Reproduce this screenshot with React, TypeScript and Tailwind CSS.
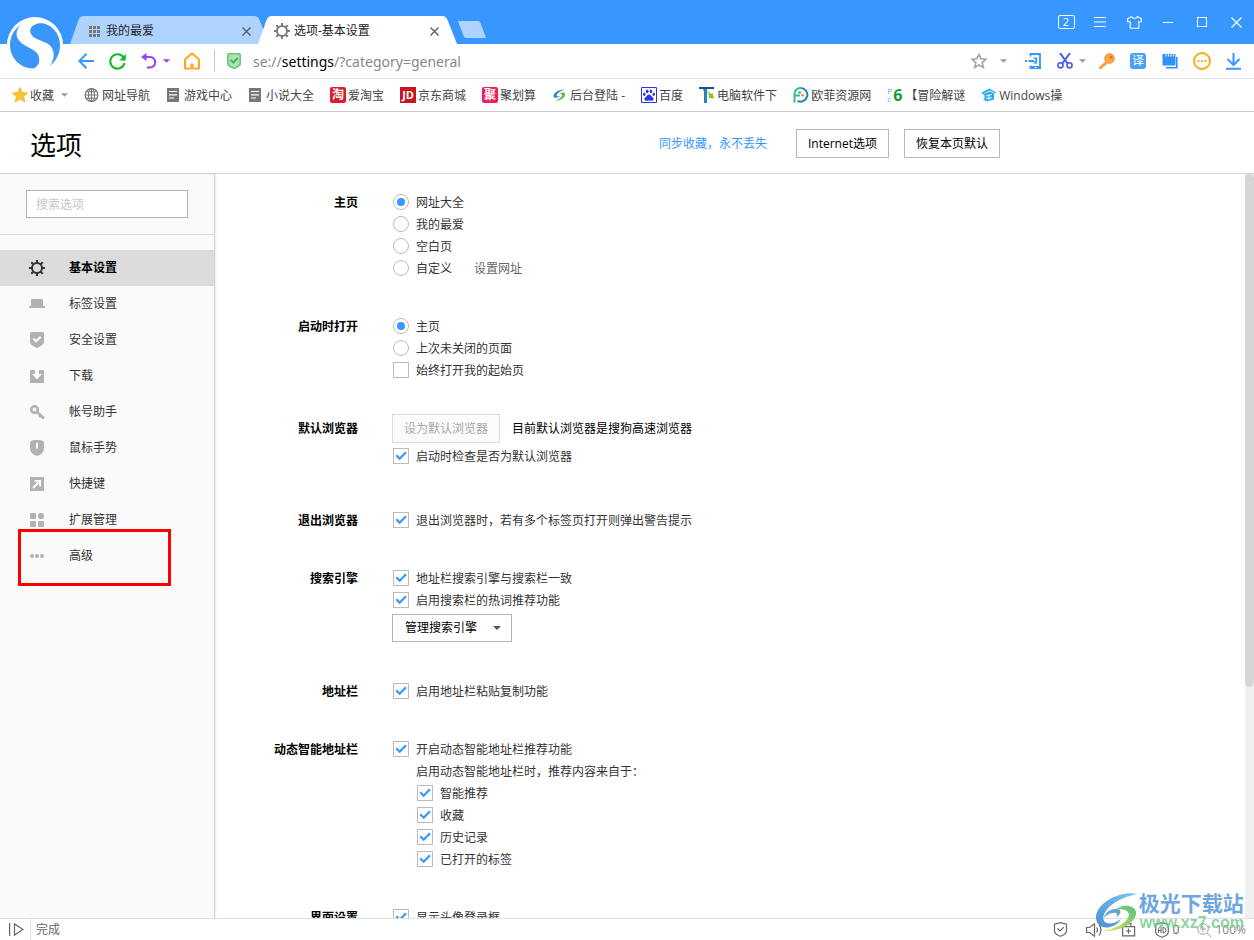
import React from "react";

const sans = "font-['Open_Sans','Noto_Sans_CJK_SC',sans-serif]";

type IconProps = { children: React.ReactNode; className?: string; box?: string };

function Icon({ children, className = "size-4", box = "0 0 16 16" }: IconProps) {
  return (
    <svg viewBox={box} className={`shrink-0 ${className}`} fill="none" aria-hidden="true">
      {children}
    </svg>
  );
}

function Caret({ className = "text-[#999]" }: { className?: string }) {
  return (
    <svg viewBox="0 0 8 4" className={`h-1 w-[7px] shrink-0 ${className}`} aria-hidden="true">
      <path d="M0 0h8L4 4z" fill="currentColor" />
    </svg>
  );
}

function Gear({ className, width = 2 }: { className: string; width?: number }) {
  return (
    <Icon className={className}>
      <circle cx="8" cy="8" r="5" stroke="currentColor" strokeWidth={width} />
      <path
        d="M8 0v3M8 13v3M0 8h3M13 8h3M2.300 2.300l2 2M11.700 11.700l2 2M2.300 13.700l2-2M11.700 4.300l2-2"
        stroke="currentColor"
        strokeWidth={width}
      />
    </Icon>
  );
}

function Close() {
  return (
    <Icon className="size-[9px]" box="0 0 9 9">
      <path d="M.5.5l8 8M8.500.5l-8 8" stroke="#555" strokeWidth="1.200" />
    </Icon>
  );
}

function Logo() {
  return (
    <svg viewBox="0 0 56 56" className="absolute top-[17px] left-[7px] z-20 size-14" aria-label="搜狗">
      <circle cx="28" cy="28" r="28" fill="#fff" />
      <path
        d="M14.700 7C8 11.500 3 19 3 28c0 13 10 23 23 23.500 6-1.500 8.500-9.500 4-15.500C26 31 15 29 11 22c-3-5.500-1-11 3.700-15z"
        fill="#3897f8"
      />
      <path
        d="M27 8C38 2 53 12.500 53 28c0 9-4 16-10.500 21.500C47.500 43 48.500 34 43 28.500 37.500 23.500 26.500 23 23.700 16.500 22.500 13 23.500 10 27 8z"
        fill="#3897f8"
      />
    </svg>
  );
}

function Tab({ active, icon, title }: { active?: boolean; icon: React.ReactNode; title: string }) {
  return (
    <div className={`relative flex h-7 w-[199px] items-center ${active ? "z-10 -ml-[11px]" : ""}`}>
      <svg viewBox="0 0 199 28" preserveAspectRatio="none" className="absolute inset-0 size-full" aria-hidden="true">
        <path
          d="M0 28L8.500 4Q10 0 14 0H184Q188 0 189.500 4L199 28z"
          fill={active ? "#ffffff" : "#afd3ff"}
        />
      </svg>
      <div className="relative flex w-full items-center gap-1 pt-[2px] pr-[18px] pl-4">
        <span className="flex w-4 justify-center">{icon}</span>
        <a href="#tab" className="flex-1 truncate text-xs leading-4 text-[#222]">
          {title}
        </a>
        <button type="button" aria-label="关闭标签页">
          <Close />
        </button>
      </div>
    </div>
  );
}

function WindowButton({ label, children }: { label: string; children: React.ReactNode }) {
  return (
    <button type="button" aria-label={label} className="flex h-6 w-[34px] items-center justify-center text-white">
      {children}
    </button>
  );
}

function TitleBar() {
  return (
    <header className="flex h-11 items-end justify-between bg-[#3897ff] pl-[70px]">
      <div className="flex items-end">
        <Tab
          title="我的最爱"
          icon={
            <Icon className="size-[11px]" box="0 0 11 11">
              <path
                d="M0 0h3v3H0zM4 0h3v3H4zM8 0h3v3H8zM0 4h3v3H0zM4 4h3v3H4zM8 4h3v3H8zM0 8h3v3H0zM4 8h3v3H4zM8 8h3v3H8z"
                fill="#777"
              />
            </Icon>
          }
        />
        <Tab active title="选项-基本设置" icon={<Gear className="size-4 text-[#7b7b7b]" />} />
        <button type="button" aria-label="新建标签页" className="mb-[6px]">
          <svg viewBox="0 0 29 17" className="h-[17px] w-[29px]" aria-hidden="true">
            <path d="M1 0H21Q23 0 23.500 2L29 17H9Q7 17 6.500 15z" fill="#afd3ff" />
          </svg>
        </button>
      </div>
      <div className="flex h-11 items-center pr-px">
        <WindowButton label="小号窗口">
          <span className="flex h-[14px] w-[17px] items-center justify-center rounded-xs border border-white text-[11px] leading-3">
            2
          </span>
        </WindowButton>
        <WindowButton label="菜单">
          <Icon className="h-[10px] w-3" box="0 0 12 10">
            <path d="M0 .5h12M0 5h12M0 9.500h12" stroke="currentColor" />
          </Icon>
        </WindowButton>
        <WindowButton label="皮肤">
          <Icon className="h-[13px] w-[15px]" box="0 0 15 13">
            <path
              d="M4.500.700L.7 2.500v3.300h2.500v6.500h8.600V5.800h2.500V2.500L10.500.700Q7.500 4.200 4.500.700z"
              stroke="currentColor"
              strokeWidth="1.100"
            />
          </Icon>
        </WindowButton>
        <WindowButton label="最小化">
          <span className="h-px w-[10px] bg-white" />
        </WindowButton>
        <WindowButton label="最大化">
          <span className="size-[10px] border border-white" />
        </WindowButton>
        <WindowButton label="关闭">
          <Icon className="size-[11px]" box="0 0 11 11">
            <path d="M.5.5l10 10M10.500.5l-10 10" stroke="currentColor" strokeWidth="1.100" />
          </Icon>
        </WindowButton>
      </div>
    </header>
  );
}

function AddressBar() {
  return (
    <div className="flex h-[35px] items-center border-b border-[#e5e5e5] bg-white pr-[13px] pl-[78px]">
      <button type="button" aria-label="后退">
        <Icon>
          <path d="M16 8H1.500M8.500.8L1.300 8l7.200 7.200" stroke="#3897ff" strokeWidth="2" />
        </Icon>
      </button>
      <button type="button" aria-label="刷新" className="ml-[15px]">
        <Icon className="size-[17px]" box="0 0 17 17">
          <path d="M14.800 5A7.200 7.200 0 1 0 15.500 10" stroke="#17b92c" strokeWidth="2.100" />
          <path d="M16.800 1v6.500h-6.500z" fill="#17b92c" />
        </Icon>
      </button>
      <button type="button" aria-label="恢复" className="ml-[15px] flex items-center gap-[6px]">
        <Icon>
          <path d="M2 4h7a5 5 0 0 1 0 10.500H6" stroke="#9b3dfa" strokeWidth="2" />
          <path d="M0 4L5.500 0v8z" fill="#9b3dfa" />
        </Icon>
        <Caret className="text-[#9b3dfa]" />
      </button>
      <button type="button" aria-label="主页" className="ml-[14px]">
        <Icon className="h-[18px] w-4" box="0 0 16 18">
          <path d="M1 7.500L8 1.300l7 6.200V16.500H1z" stroke="#ffa91a" strokeWidth="2" strokeLinejoin="round" />
          <path d="M7 12h2v4H7z" fill="#ffa91a" stroke="#ffa91a" />
        </Icon>
      </button>
      <span className="ml-[14px] h-[22px] w-px bg-[#c8c8c8]" />
      <Icon className="ml-3 h-4 w-[14px]" box="0 0 14 16">
        <path d="M2 .8h10q1.200 0 1.200 1.200v9q0 2-6.200 4.200Q.8 13 .8 11V2Q.8.8 2 .8z" fill="#a8e4b0" stroke="#6cc67c" strokeWidth="1.600" />
        <path d="M3.500 6.800L6.300 9.500l4.400-4.500" stroke="#46a85a" strokeWidth="1.800" />
      </Icon>
      <div
        role="textbox"
        aria-label="地址栏"
        tabIndex={0}
        className="ml-3 min-w-0 flex-1 truncate pt-[2px] font-['Noto_Sans','Noto_Sans_CJK_SC',sans-serif] text-[14px] leading-5 text-[#888]"
      >
        se://<span className="text-black">settings</span>/?category=general
      </div>
      <div className="flex items-center">
        <button type="button" aria-label="收藏此页">
          <Icon>
            <path d="M8 1.300l2 4.500 4.900.5-3.700 3.300 1.100 4.900L8 12l-4.300 2.500 1.100-4.900L1.100 6.300 6 5.800z" stroke="#a8a8a8" strokeWidth="1.700" />
          </Icon>
        </button>
        <button type="button" aria-label="更多收藏" className="ml-[13px] flex">
          <Caret />
        </button>
        <button type="button" aria-label="发送到手机" className="ml-[18px]">
          <Icon>
            <path d="M5.500 3.500V1h9.500v14H5.500v-2.500" stroke="#3897ff" strokeWidth="1.800" />
            <path d="M5 13h11v3H5z" fill="#3897ff" />
            <path d="M0 8h2M3.500 8h6" stroke="#3897ff" strokeWidth="1.800" />
            <path d="M8 4.500h4v6H8l3-3z" fill="#3897ff" />
            <path d="M9.500 14.500h2" stroke="#fff" />
          </Icon>
        </button>
        <button type="button" aria-label="截图" className="ml-4 flex items-center gap-[6px]">
          <Icon>
            <path d="M3 0l8 11M13 0L5 11" stroke="#4a5cf5" strokeWidth="2" />
            <circle cx="3.500" cy="12.300" r="2.600" stroke="#4a5cf5" strokeWidth="1.600" />
            <circle cx="12.500" cy="12.300" r="2.600" stroke="#4a5cf5" strokeWidth="1.600" />
          </Icon>
          <Caret />
        </button>
        <button type="button" aria-label="密码" className="ml-[13px]">
          <Icon>
            <path d="M7.500 7.500L0 14v2h3v-1.500h1.500V13H6l3-3z" fill="#f0a03c" />
            <circle cx="10.500" cy="5.500" r="5.400" fill="#f3a746" />
            <circle cx="12" cy="4" r="1.600" fill="#cf7d1c" />
          </Icon>
        </button>
        <button
          type="button"
          aria-label="翻译"
          className="ml-[15px] flex size-4 items-center justify-center rounded-[3px] bg-[#4a9ffb] text-xs leading-4 text-white"
        >
          译
        </button>
        <button type="button" aria-label="多窗口" className="ml-4">
          <Icon>
            <path d="M1 1h12q.5 0 .5.500V12q0 .5-.5.5H1q-.5 0-.5-.5V1.500Q.5 1 1 1z" fill="#3191fa" />
            <path d="M14.800 4v10.800H4" stroke="#3191fa" strokeWidth="1.600" />
            <path d="M4 1.500v2M6.500 1.500v2M9 1.500v2M11.500 1.500v2" stroke="#fff" strokeWidth="1.200" />
          </Icon>
        </button>
        <button type="button" aria-label="更多扩展" className="ml-[15px]">
          <Icon className="size-[18px]" box="0 0 18 18">
            <circle cx="9" cy="9" r="8" stroke="#ffa91a" strokeWidth="2" />
            <path d="M4.500 8h2v2h-2zM8 8h2v2H8zM11.500 8h2v2h-2z" fill="#ffa91a" />
          </Icon>
        </button>
        <button type="button" aria-label="下载" className="ml-[15px]">
          <Icon className="h-[17px] w-[15px]" box="0 0 15 17">
            <path d="M7.500 0v12M1.500 6l6 6 6-6M0 15.800h15" stroke="#3897ff" strokeWidth="2" />
          </Icon>
        </button>
      </div>
    </div>
  );
}

function PageGlyph() {
  return (
    <Icon>
      <path d="M1 1h12v14H1z" fill="#777" />
      <path d="M3 4.500h8M3 7.800h8M3 11h5" stroke="#fff" strokeWidth="1.200" />
    </Icon>
  );
}

function Badge({ className, children }: { className: string; children: React.ReactNode }) {
  return (
    <span className={`flex size-4 shrink-0 items-center justify-center overflow-hidden leading-4 font-bold text-white ${className}`}>
      {children}
    </span>
  );
}

const bookmarks: { title: string; icon: React.ReactNode }[] = [
  {
    title: "网址导航",
    icon: (
      <Icon>
        <circle cx="7.500" cy="8" r="6.400" stroke="#777" strokeWidth="1.200" />
        <ellipse cx="7.500" cy="8" rx="3" ry="6.400" stroke="#777" strokeWidth="1.100" />
        <path d="M7.500 1.500v13M1 8h13M2 4.800h11M2 11.200h11" stroke="#777" />
      </Icon>
    ),
  },
  { title: "游戏中心", icon: <PageGlyph /> },
  { title: "小说大全", icon: <PageGlyph /> },
  { title: "爱淘宝", icon: <Badge className="rounded-xs bg-[#dc1f2e] text-xs">淘</Badge> },
  { title: "京东商城", icon: <Badge className="bg-[#c81623] text-[11px]">JD</Badge> },
  { title: "聚划算", icon: <Badge className="rounded-xs bg-[#f01f58] text-xs">聚</Badge> },
  {
    title: "后台登陆 -",
    icon: (
      <Icon>
        <path d="M13 2.500C7 2 1 6 1.500 9.500c.5 2 4 1.500 7-.5C6 10 4 9.500 5 7.500 6 5.500 9 3.500 13 2.500z" fill="#3a83d2" />
        <path d="M10 7.500c1 1.500-2 5-7 6 5 .8 10-2.500 10-6 0-3-4-2-6-.5 1.500-.5 2.500-.3 3 .5z" fill="#58b947" />
      </Icon>
    ),
  },
  {
    title: "百度",
    icon: (
      <Icon>
        <path d="M.5.5h15v15H.5z" fill="#fff" stroke="#2f35dc" />
        <path d="M8 7.500c1.800 0 2.500 2 4 3.200 1.500 1.800-.2 3.500-2 3.100-1.500-.3-2.500-.3-4 0-1.800.4-3.500-1.300-2-3.100C5.500 9.500 6.200 7.500 8 7.500z" fill="#2f35dc" />
        <ellipse cx="6.200" cy="4.300" rx="1.300" ry="1.900" fill="#2f35dc" />
        <ellipse cx="9.900" cy="4.300" rx="1.300" ry="1.900" fill="#2f35dc" />
        <ellipse cx="3.300" cy="7.200" rx="1.200" ry="1.700" fill="#2f35dc" />
        <ellipse cx="12.700" cy="7.200" rx="1.200" ry="1.700" fill="#2f35dc" />
      </Icon>
    ),
  },
  {
    title: "电脑软件下",
    icon: (
      <Icon>
        <path d="M0 0h15v2H0z" fill="#1d4f90" />
        <path d="M4 2h4v14H5V5z" fill="#2d7fbd" />
        <path d="M8 3l4 4 1.500-1L15 11.500 9 11l1.500-1.500z" fill="#86c31e" />
      </Icon>
    ),
  },
  {
    title: "欧菲资源网",
    icon: (
      <Icon>
        <path d="M1.500 15.500V7a6 6 0 0 1 6-6" stroke="#2fbd8c" strokeWidth="2" />
        <path d="M7.500 1a7 6.800 0 1 1-3 13" stroke="#1e86b6" strokeWidth="2" />
        <path d="M2 8.500h5M5 5.500h3" stroke="#2fbd8c" strokeWidth="1.800" />
        <circle cx="9.500" cy="8.300" r="1.300" fill="#f27d22" />
      </Icon>
    ),
  },
  {
    title: "【冒险解谜",
    icon: (
      <span className="flex h-4 w-4 shrink-0 items-center">
        <span className="flex w-[6px] flex-col text-[8px] leading-[8px] text-[#4ab7e6]">
          <span>P</span>
          <span>c</span>
        </span>
        <span className="text-base leading-4 font-bold text-[#129a3a]">6</span>
      </span>
    ),
  },
  {
    title: "Windows操",
    icon: (
      <Icon>
        <path d="M0 6L8.500 1.500 15 5.500l-2 1v6L6 14.500l-4-2 1.500-1V8z" fill="#26a9e8" />
        <path d="M3.500 6.500L9 4l4 2M5 9l6-1.500M5 11.800l6-1.300M8 7v6" stroke="#fff" strokeWidth=".9" />
      </Icon>
    ),
  },
];

function BookmarkBar() {
  return (
    <nav className="flex h-[33px] items-center gap-4 overflow-hidden border-b border-[#c8c8c8] bg-white pl-3 text-xs leading-4 whitespace-nowrap text-[#444]">
      <button type="button" className="flex items-center gap-[2px]">
        <Icon>
          <path d="M8 .5l2.300 5 5.400.5-4 3.600 1.200 5.600L8 12.300l-4.900 2.900 1.200-5.600L.3 6l5.400-.5z" fill="#f7c531" stroke="#eaa92a" strokeWidth=".6" />
        </Icon>
        <span className="pt-[2px]">收藏</span>
        <span className="ml-[5px]">
          <Caret />
        </span>
      </button>
      {bookmarks.map((b) => (
        <a key={b.title} href="#bookmark" className="flex items-center gap-[2px]">
          {b.icon}
          <span className="pt-[2px]">{b.title}</span>
        </a>
      ))}
    </nav>
  );
}

const grey = "#b2b2b2";

const navItems: { title: string; icon: React.ReactNode }[] = [
  { title: "基本设置", icon: <Gear className="size-4 text-[#333]" /> },
  {
    title: "标签设置",
    icon: (
      <Icon>
        <path d="M3 3h10q1 0 1 1v6h2v2H0v-2h2V4q0-1 1-1z" fill={grey} />
      </Icon>
    ),
  },
  {
    title: "安全设置",
    icon: (
      <Icon>
        <path d="M2.500 0h11Q15 0 15 1.500V10q0 3-7 6-7-3-7-6V1.500Q1 0 2.500 0z" fill={grey} />
        <path d="M4.300 6.500L7 9.300l4.700-4.500" stroke="#fff" strokeWidth="2" />
      </Icon>
    ),
  },
  {
    title: "下载",
    icon: (
      <Icon>
        <path d="M1 2h14v13H1z" fill={grey} />
        <path d="M6 1.500h4V6h3l-5 5.500L3 6h3z" fill="#fafafa" />
      </Icon>
    ),
  },
  {
    title: "帐号助手",
    icon: (
      <Icon>
        <circle cx="5.500" cy="5.500" r="3.300" stroke={grey} strokeWidth="2.600" />
        <path d="M8 8l6.500 6M11 10.500v3M14 12v3" stroke={grey} strokeWidth="2.600" />
      </Icon>
    ),
  },
  {
    title: "鼠标手势",
    icon: (
      <Icon>
        <path d="M3 .5Q8-.7 13 .5q2 .5 2 2V8q0 6-7 8-7-2-7-8V2.500q0-1.500 2-2z" fill={grey} />
        <path d="M8 3v5.500" stroke="#fff" strokeWidth="2" />
      </Icon>
    ),
  },
  {
    title: "快捷键",
    icon: (
      <Icon>
        <path d="M1 1h14v14H1z" fill={grey} />
        <path d="M4 12l6-6" stroke="#fff" strokeWidth="2.200" />
        <path d="M5.500 4H12v6.500h-1.800V5.800H5.500z" fill="#fff" />
      </Icon>
    ),
  },
  {
    title: "扩展管理",
    icon: (
      <Icon>
        <rect x="1" y="1" width="6" height="6" rx="1" fill={grey} />
        <circle cx="12" cy="4" r="3.100" fill={grey} />
        <rect x="1" y="9" width="6" height="6" rx="1" fill={grey} />
        <rect x="9" y="9" width="6" height="6" rx="1" fill={grey} />
      </Icon>
    ),
  },
  {
    title: "高级",
    icon: (
      <Icon>
        <circle cx="3" cy="8" r="2" fill={grey} />
        <circle cx="8" cy="8" r="2" fill={grey} />
        <circle cx="13" cy="8" r="2" fill={grey} />
      </Icon>
    ),
  },
];

function Sidebar() {
  return (
    <aside className="w-[215px] shrink-0 border-r border-[#d2d2d2] bg-[#fafafa] shadow-[1px_0_2px_rgba(0,0,0,0.08)]">
      <div className="border-b border-[#dcdcdc] px-[26px] py-4">
        <input
          type="search"
          aria-label="搜索选项"
          placeholder="搜索选项"
          className="block h-7 w-full border border-[#b4b4b4] bg-white px-[9px] text-xs text-[#333] placeholder:text-[#c8c8c8]"
        />
      </div>
      <nav className="mt-[15px]">
        {navItems.map((item, i) => (
          <a
            key={item.title}
            href="#section"
            className={`relative flex h-9 items-center gap-6 pl-[29px] text-xs ${
              i === 0 ? "bg-[#dcdcdc] font-bold text-black" : "text-[#333]"
            }`}
          >
            {item.icon}
            {item.title}
            {item.title === "高级" && (
              <span className="absolute top-[-9px] left-[18px] h-[57px] w-[153px] border-3 border-[#fe0000]" />
            )}
          </a>
        ))}
      </nav>
    </aside>
  );
}

function Section({ title, children }: { title: string; children: React.ReactNode }) {
  return (
    <section className="flex gap-[34px]">
      <h2 className="h-[22px] w-[143px] shrink-0 text-right text-xs leading-6 font-bold text-black">{title}</h2>
      <div className="min-w-0 flex-1">{children}</div>
    </section>
  );
}

function Check({ label, checked = true }: { label: string; checked?: boolean }) {
  return (
    <label className="flex h-[22px] items-center gap-[7px] pl-px">
      <span className="grid size-4">
        <input
          type="checkbox"
          defaultChecked={checked}
          className="peer col-start-1 row-start-1 size-4 appearance-none border border-[#bbb] bg-white"
        />
        <svg
          viewBox="0 0 16 16"
          className="pointer-events-none invisible col-start-1 row-start-1 size-4 peer-checked:visible"
          fill="none"
          aria-hidden="true"
        >
          <path d="M3.200 7.300l3.500 3.500 6.300-6.600" stroke="#3897ff" strokeWidth="2.200" />
        </svg>
      </span>
      <span className="pt-[2px]">{label}</span>
    </label>
  );
}

function Radio({ name, label, checked }: { name: string; label: string; checked?: boolean }) {
  return (
    <label className="flex h-[22px] items-center gap-[7px] pl-px">
      <input
        type="radio"
        name={name}
        defaultChecked={checked}
        className="flex size-4 appearance-none items-center justify-center rounded-full border border-[#bbb] bg-white before:size-2 before:rounded-full checked:before:bg-[#3897ff]"
      />
      <span className="pt-[2px]">{label}</span>
    </label>
  );
}

function Settings() {
  return (
    <main className="flex min-w-0 flex-1 flex-col gap-9 overflow-hidden pt-[17px] text-xs text-[#333]">
      <Section title="主页">
        <Radio name="home" label="网址大全" checked />
        <Radio name="home" label="我的最爱" />
        <Radio name="home" label="空白页" />
        <div className="flex items-center gap-[22px]">
          <Radio name="home" label="自定义" />
          <a href="#home" className="pt-[2px] text-[#666]">
            设置网址
          </a>
        </div>
      </Section>
      <Section title="启动时打开">
        <Radio name="start" label="主页" checked />
        <Radio name="start" label="上次未关闭的页面" />
        <Check label="始终打开我的起始页" checked={false} />
      </Section>
      <Section title="默认浏览器">
        <div className="mb-[6px] flex h-[22px] items-center gap-3">
          <button type="button" disabled className="h-[29px] shrink-0 border border-[#dcdcdc] bg-[#fbfbfb] px-[11px] pt-[2px] text-[#a8a8a8]">
            设为默认浏览器
          </button>
          <span className="pt-[2px] text-black">目前默认浏览器是搜狗高速浏览器</span>
        </div>
        <div className="mb-[6px]">
          <Check label="启动时检查是否为默认浏览器" />
        </div>
      </Section>
      <Section title="退出浏览器">
        <Check label="退出浏览器时，若有多个标签页打开则弹出警告提示" />
      </Section>
      <Section title="搜索引擎">
        <Check label="地址栏搜索引擎与搜索栏一致" />
        <Check label="启用搜索栏的热词推荐功能" />
        <div className="mt-[3px] mb-[2px] grid w-[120px] items-center">
          <select
            aria-label="管理搜索引擎"
            className="col-start-1 row-start-1 h-7 appearance-none border border-[#b4b4b4] bg-white pl-3 text-xs text-black"
          >
            <option>管理搜索引擎</option>
          </select>
          <svg
            viewBox="0 0 8 4"
            className="pointer-events-none col-start-1 row-start-1 mr-[11px] h-1 w-2 justify-self-end"
            aria-hidden="true"
          >
            <path d="M0 0h8L4 4z" fill="#555" />
          </svg>
        </div>
      </Section>
      <Section title="地址栏">
        <Check label="启用地址栏粘贴复制功能" />
      </Section>
      <Section title="动态智能地址栏">
        <Check label="开启动态智能地址栏推荐功能" />
        <div className="pl-6">
          <p className="h-[22px] leading-6">启用动态智能地址栏时，推荐内容来自于：</p>
          <Check label="智能推荐" />
          <Check label="收藏" />
          <Check label="历史记录" />
          <Check label="已打开的标签" />
        </div>
      </Section>
      <Section title="界面设置">
        <Check label="显示头像登录框" />
      </Section>
    </main>
  );
}

function StatusBar() {
  return (
    <footer className="flex h-[22px] shrink-0 items-center border-t border-[#e0e0e0] bg-white text-xs leading-4 text-[#666]">
      <button type="button" aria-label="侧边栏" className="pl-[9px]">
        <Icon className="h-[13px] w-[15px]" box="0 0 15 13">
          <path d="M.6 0v13M5.500.900v11.200L14 6.500z" stroke="#666" strokeWidth="1.200" />
        </Icon>
      </button>
      <span className="ml-[6px] h-full w-px bg-[#e0e0e0]" />
      <span className="ml-[5px] flex-1">完成</span>
      <div className="flex items-center pr-2 text-xs">
        <Icon className="size-[15px]" box="0 0 15 15">
          <path d="M7.500.7l6 1.500V9q0 3-6 5.300-6-2.300-6-5.300V2.200z" stroke="#666" strokeWidth="1.200" />
          <path d="M4.500 6.500L7 9l3.800-3.800" stroke="#666" strokeWidth="1.200" />
        </Icon>
        <Icon className="ml-[18px] h-[14px] w-4" box="0 0 16 14">
          <path d="M.6 4.500h3L8.500.8v12.400L3.600 9.500h-3zM10.500 4.500q2 2.500 0 5M13 1.500q4 5.500 0 11" stroke="#666" strokeWidth="1.200" />
        </Icon>
        <Icon className="ml-[19px] size-[15px]" box="0 0 15 15">
          <path d="M1.600 4.600h12v9.200h-12zM5 4.500V1.600h5v2.900M7.500 6.500v5M5 9h5" stroke="#666" strokeWidth="1.200" />
        </Icon>
        <Icon className="ml-[18px] size-4">
          <path d="M8 .7l6.300 1.600V10q0 3-6.300 5.300Q1.700 13 1.700 10V2.300z" stroke="#666" strokeWidth="1.200" />
          <path d="M4.500 11V6.500q1.300-2.500 2.500 0V11M4.500 8.500H7M9 5.500V11q3 0 3-2.800T9 5.500z" stroke="#666" />
        </Icon>
        <span className="ml-[3px]">0</span>
        <Icon className="ml-[18px] size-[14px] opacity-60" box="0 0 14 14">
          <circle cx="6" cy="6" r="5.300" stroke="#666" />
          <path d="M6 3v6M3 6h6M10 10l4 4" stroke="#666" />
        </Icon>
        <span className="ml-[4px] text-[#888]">100%</span>
      </div>
    </footer>
  );
}

function Watermark() {
  return (
    <div className="pointer-events-none absolute right-[10px] bottom-[8px] z-30 flex items-end">
      <svg viewBox="0 0 44 40" className="h-10 w-11" fill="none" aria-hidden="true">
        <defs>
          <linearGradient id="wing" x1="0" y1="1" x2="1" y2="0">
            <stop offset="0" stopColor="#4a8fd6" />
            <stop offset="1" stopColor="#7cc8f2" />
          </linearGradient>
          <linearGradient id="leaf" x1="0" y1="1" x2="1" y2="0">
            <stop offset="0" stopColor="#e4e65a" />
            <stop offset="1" stopColor="#58bd80" />
          </linearGradient>
        </defs>
        <path d="M43 2C26-2 2 10 1 25c0 8 6 12 14 10 5-1 9-4 11-8-5 4-12 6-16 3C4 25 14 7 43 2z" fill="url(#wing)" />
        <path d="M9 26c1-6 8-10 14-9 4 1 3 6-2 8 2-3 1-5-3-4-3 0-7 2-9 5z" fill="#5da3df" />
        <path d="M20 18c7-7 20-5 21 2 1 9-13 20-34 19 14-2 26-9 27-16 0-5-8-7-14-5z" fill="url(#leaf)" />
      </svg>
      <div className="flex flex-col">
        <span className="text-[21px] leading-[22px] font-bold text-[#6ea7de]">极光下载站</span>
        <span className="pl-px font-['Liberation_Sans',sans-serif] text-[16px] leading-[18px] font-bold text-[#78cc8d]/85">
          www.xz7.com
        </span>
      </div>
    </div>
  );
}

export default function App() {
  return (
    <div className={`relative flex h-screen flex-col overflow-hidden bg-white ${sans}`}>
      <Logo />
      <TitleBar />
      <AddressBar />
      <BookmarkBar />
      <div className="h-[62px] shrink-0 border-b border-[#d2d2d2] bg-white">
        <div className="flex h-full max-w-[1000px] items-center pt-[2px] pl-[30px] text-xs text-black">
          <h1 className="flex-1 pt-[2px] text-[26px] leading-9 font-normal">选项</h1>
          <a href="#sync" className="mr-[29px] text-[#3897ff]">
            同步收藏，永不丢失
          </a>
          <button type="button" className="mr-[15px] h-[29px] border border-[#b8b8b8] px-[11px]">
            Internet选项
          </button>
          <button type="button" className="h-[29px] border border-[#b8b8b8] px-[11px]">
            恢复本页默认
          </button>
        </div>
      </div>
      <div className="flex min-h-0 flex-1">
        <Sidebar />
        <Settings />
        <div className="w-[9px] shrink-0 bg-[#efefef]" aria-hidden="true">
          <div className="h-[69%] rounded-full bg-[#d6d6d6]" />
        </div>
      </div>
      <StatusBar />
      <Watermark />
    </div>
  );
}
